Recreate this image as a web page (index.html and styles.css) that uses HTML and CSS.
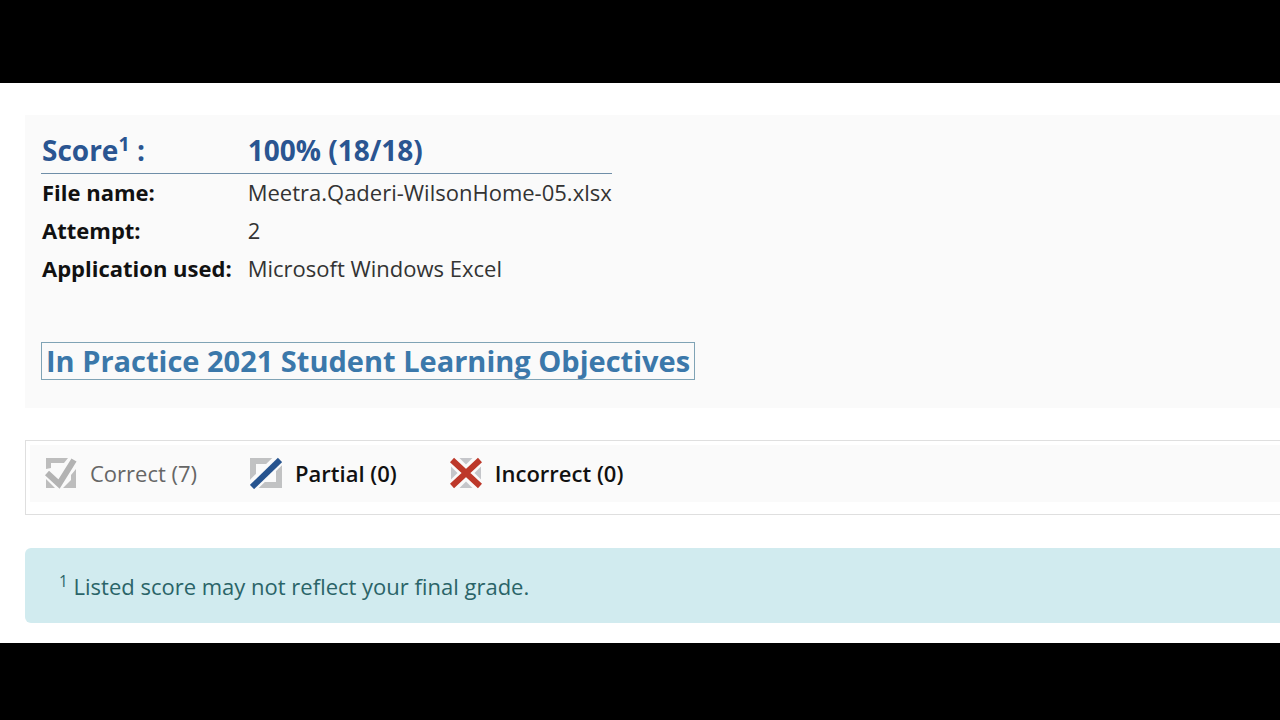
FILE: index.html
```html
<!DOCTYPE html>
<html lang="en">
<head>
<meta charset="utf-8">
<meta name="viewport" content="width=device-width, initial-scale=1">
<title>Score report</title>
<link rel="stylesheet" href="styles.css">
</head>
<body>
<main class="report">
  <section class="summary">
    <table class="details">
      <tbody>
        <tr class="score-row"><th scope="row">Score<sup>1</sup> :</th><td>100% (18/18)</td></tr>
        <tr><th scope="row">File name:</th><td>Meetra.Qaderi-WilsonHome-05.xlsx</td></tr>
        <tr><th scope="row">Attempt:</th><td>2</td></tr>
        <tr><th scope="row">Application used:</th><td>Microsoft Windows Excel</td></tr>
      </tbody>
    </table>
    <a class="objectives" href="#objectives">In Practice 2021 Student Learning Objectives</a>
  </section>

  <section class="filters" aria-label="Filter results">
    <div class="filter-bar">
      <button class="filter filter-off" type="button">
        <svg class="icon" viewBox="0 0 32 32" aria-hidden="true">
          <path d="M1 1H23L19 6H6V11L1 12Z" fill="#bdbdbd"/>
          <path d="M1 22L10 31H1Z" fill="#bdbdbd"/>
          <path d="M31 12V31H18L26 23V18Z" fill="#bdbdbd"/>
          <path d="M2 16L14 27L29 3" fill="none" stroke="#b3b3b3" stroke-width="6"/>
        </svg>
        <span>Correct (7)</span>
      </button>
      <button class="filter" type="button">
        <svg class="icon" viewBox="0 0 32 32" aria-hidden="true">
          <path d="M3 4H29V28H3Z" fill="none" stroke="#c1c2c3" stroke-width="6"/>
          <path d="M-2 33L34 -2" stroke="#fafafa" stroke-width="12"/>
          <path d="M2 30L30 3" stroke="#27548f" stroke-width="6"/>
        </svg>
        <span>Partial (0)</span>
      </button>
      <button class="filter" type="button">
        <svg class="icon" viewBox="0 0 32 32" aria-hidden="true">
          <path d="M1 1H31V31H1Z" fill="#c5c6ca"/>
          <path d="M-2 -2L34 34M-2 34L34 -2" stroke="#fafafa" stroke-width="12"/>
          <path d="M2 3L30 29M2 29L30 3" stroke="#bd382a" stroke-width="6"/>
        </svg>
        <span>Incorrect (0)</span>
      </button>
    </div>
  </section>

  <aside class="note"><sup>1</sup> Listed score may not reflect your final grade.</aside>
</main>
</body>
</html>
```
FILE: styles.css
```css
* {
  box-sizing: border-box;
}

body {
  margin: 0;
  padding: 83px 0 77px;
  background: #000;
  color: #333;
  font-family: "Open Sans", "Noto Sans", sans-serif;
  font-size: 22px;
  line-height: 38px;
}

sup {
  font-size: 70%;
  line-height: 0;
}

.report {
  padding: 32px 0 20px 25px;
  background: #fff;
}

.summary {
  padding: 14px 16px 28px;
  background: #fafafa;
}

.details {
  margin-bottom: 54px;
  border-collapse: collapse;
}

.details th,
.details td {
  padding: 0 0 2px;
  line-height: 36px;
  text-align: left;
  white-space: nowrap;
}

.details th {
  padding: 0 16px 2px 1px;
  color: #111;
  font-weight: 700;
}

.details .score-row th,
.details .score-row td {
  height: 44px;
  border-bottom: 1px solid #6f8ea8;
  color: #2a5591;
  font-size: 28px;
  font-weight: 700;
}

.objectives {
  display: block;
  width: fit-content;
  padding: 0 4px;
  border: 1px solid #7fa3b5;
  color: #3b78aa;
  font-size: 29px;
  font-weight: 700;
  line-height: 36px;
  text-decoration: none;
}

.filters {
  margin: 32px 0 33px;
  padding: 4px 0 12px 4px;
  border: 1px solid #dfdfdf;
  border-right: 0;
}

.filter-bar {
  display: flex;
  gap: 53px;
  padding: 9px 15px 10px;
  background: #fafafa;
}

.filter {
  display: flex;
  align-items: center;
  gap: 13px;
  padding: 0;
  border: 0;
  background: none;
  color: #111;
  font: inherit;
  font-weight: 600;
  cursor: pointer;
}

.filter-off {
  color: #666;
  font-weight: 400;
}

.icon {
  width: 32px;
  height: 32px;
}

.note {
  padding: 19px 34px 18px;
  border-radius: 6px 0 0 6px;
  background: #d1ebef;
  color: #2a6468;
}
```
